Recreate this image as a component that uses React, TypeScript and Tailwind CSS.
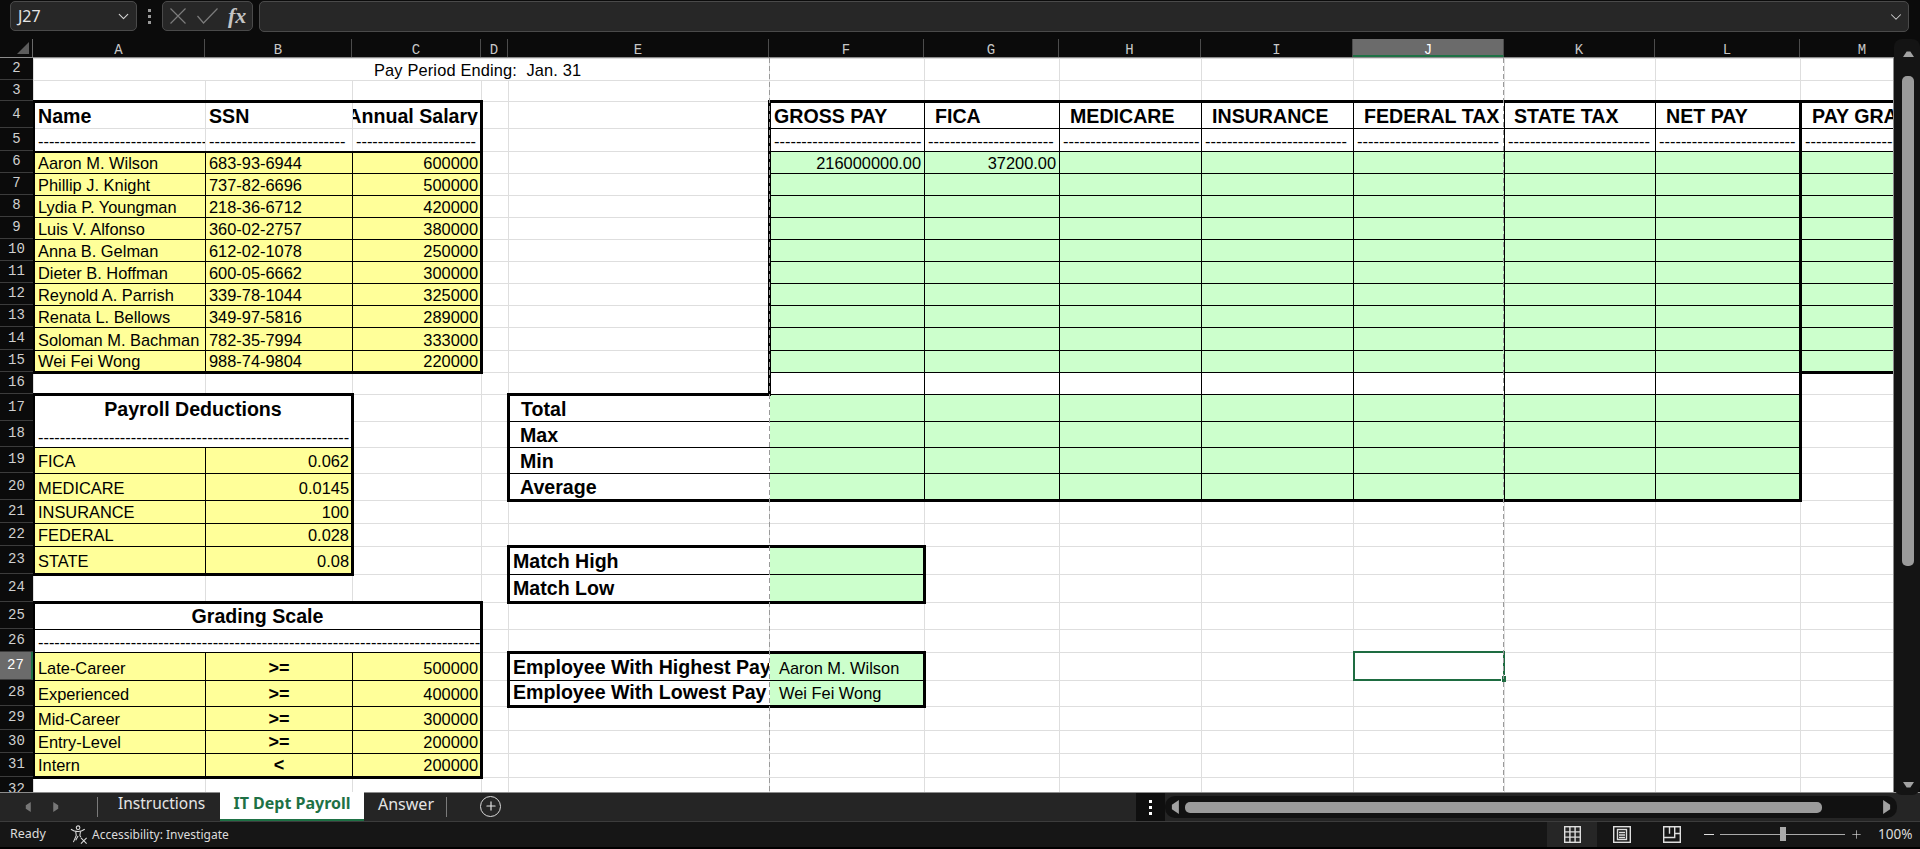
import { ChevronDown, Plus } from "lucide-react";

type Edge = "grid" | "thin" | "med" | "thick" | "none";

const columns = [
  { label: "A", w: "w-[172px]" },
  { label: "B", w: "w-[147px]" },
  { label: "C", w: "w-[129px]" },
  { label: "D", w: "w-[27px]" },
  { label: "E", w: "w-[261px]" },
  { label: "F", w: "w-[155px]" },
  { label: "G", w: "w-[135px]" },
  { label: "H", w: "w-[142px]" },
  { label: "I", w: "w-[152px]" },
  { label: "J", w: "w-[151px]" },
  { label: "K", w: "w-[151px]" },
  { label: "L", w: "w-[145px]" },
  { label: "M", w: "w-[125px]" },
];

const rows = [
  { n: 2, h: "h-[22px]" },
  { n: 3, h: "h-[21px]" },
  { n: 4, h: "h-[27px]" },
  { n: 5, h: "h-[23px]" },
  { n: 6, h: "h-[22px]" },
  { n: 7, h: "h-[22px]" },
  { n: 8, h: "h-[22px]" },
  { n: 9, h: "h-[22px]" },
  { n: 10, h: "h-[22px]" },
  { n: 11, h: "h-[22px]" },
  { n: 12, h: "h-[22px]" },
  { n: 13, h: "h-[22px]" },
  { n: 14, h: "h-[23px]" },
  { n: 15, h: "h-[22px]" },
  { n: 16, h: "h-[22px]" },
  { n: 17, h: "h-[27px]" },
  { n: 18, h: "h-[26px]" },
  { n: 19, h: "h-[26px]" },
  { n: 20, h: "h-[27px]" },
  { n: 21, h: "h-[23px]" },
  { n: 22, h: "h-[23px]" },
  { n: 23, h: "h-[28px]" },
  { n: 24, h: "h-[28px]" },
  { n: 25, h: "h-[27px]" },
  { n: 26, h: "h-[23px]" },
  { n: 27, h: "h-[28px]" },
  { n: 28, h: "h-[26px]" },
  { n: 29, h: "h-[24px]" },
  { n: 30, h: "h-[23px]" },
  { n: 31, h: "h-[24px]" },
  { n: 32, h: "h-[26px]" },
];

const topEdge: Record<Edge, string> = {
  grid: "border-t border-t-[#dedede]",
  thin: "border-t border-t-black",
  med: "border-t-2 border-t-black",
  thick: "border-t-[3px] border-t-black",
  none: "border-t border-t-transparent",
};
const rightEdge: Record<Edge, string> = {
  grid: "border-r border-r-[#dedede]",
  thin: "border-r border-r-black",
  med: "border-r-2 border-r-black",
  thick: "border-r-[3px] border-r-black",
  none: "border-r border-r-transparent",
};
const bottomEdge: Record<Edge, string> = {
  grid: "border-b border-b-[#dedede]",
  thin: "border-b border-b-black",
  med: "border-b-2 border-b-black",
  thick: "border-b-[3px] border-b-black",
  none: "border-b border-b-transparent",
};
const leftEdge: Record<Edge, string> = {
  grid: "border-l border-l-[#dedede]",
  thin: "border-l border-l-black",
  med: "border-l-2 border-l-black",
  thick: "border-l-[3px] border-l-black",
  none: "border-l border-l-transparent",
};

// edges are kept once: h = bottom of row r at col c, v = right of col c at row r
const edges = new Map<string, Edge>();
const horiz = (c1: number, c2: number, r: number, kind: Edge) => {
  for (let c = c1; c <= c2; c++) edges.set(`h:${c}:${r}`, kind);
};
const vert = (c: number, r1: number, r2: number, kind: Edge) => {
  for (let r = r1; r <= r2; r++) edges.set(`v:${c}:${r}`, kind);
};
const thinGrid = (c1: number, c2: number, r1: number, r2: number) => {
  for (let r = r1; r <= r2; r++) horiz(c1, c2, r, "thin");
  for (let c = c1; c <= c2; c++) vert(c, r1, r2, "thin");
};

// name / ssn / salary block
thinGrid(1, 3, 6, 15);
horiz(1, 3, 3, "thick");
horiz(1, 3, 5, "med");
horiz(1, 3, 15, "thick");
vert(0, 4, 15, "thick");
vert(3, 4, 15, "thick");

// pay columns
thinGrid(6, 13, 4, 15);
thinGrid(6, 12, 16, 20);
horiz(6, 13, 3, "thick");
horiz(13, 13, 15, "thick");
vert(5, 4, 16, "thick");
vert(12, 4, 20, "thick");
vert(13, 4, 15, "grid");

// totals
for (let r = 17; r <= 20; r++) horiz(5, 5, r, "thin");
horiz(5, 5, 16, "thick");
horiz(5, 12, 20, "thick");
vert(4, 17, 20, "thick");
vert(5, 17, 20, "none");

// match + employee boxes
for (const [a, b] of [
  [23, 24],
  [27, 28],
]) {
  horiz(5, 6, a - 1, "thick");
  horiz(5, 6, a, "thin");
  horiz(5, 6, b, "thick");
  vert(4, a, b, "thick");
  vert(5, a, b, "none");
  vert(6, a, b, "thick");
}

// payroll deductions
thinGrid(1, 2, 19, 23);
horiz(1, 2, 16, "thick");
horiz(1, 2, 17, "none");
horiz(1, 2, 18, "thin");
horiz(1, 2, 23, "thick");
vert(0, 17, 23, "thick");
vert(2, 17, 23, "thick");

// grading scale
thinGrid(1, 3, 27, 31);
horiz(1, 3, 24, "thick");
horiz(1, 3, 25, "thin");
horiz(1, 3, 26, "thin");
horiz(1, 3, 31, "thick");
vert(0, 25, 31, "thick");
vert(3, 25, 31, "thick");

const edgeAt = (key: string): Edge => edges.get(key) ?? "grid";

type Cell = { t?: string; span?: number; c?: string; clipLeft?: boolean };

const yellow = "bg-[#ffff99]";
const green = "bg-[#ccffcc]";
const bold = "text-[19.6px] font-bold";
const head = `${bold} pb-[3px]`;
const dash = (n: number) => "-".repeat(n);

const cells: Record<string, Cell> = {
  A2: { t: "Pay Period Ending:  Jan. 31", span: 5, c: "pl-[340px] tracking-[0.15px]" },
  A4: { t: "Name", c: `${head} pl-[3px]` },
  B4: { t: "SSN", c: `${head} pl-[3px]` },
  C4: { t: "Annual Salary", c: `${head} pr-[2px]`, clipLeft: true },
  F4: { t: "GROSS PAY", c: `${head} pl-[3px]` },
  G4: { t: "FICA", c: `${head} pl-[10px]` },
  H4: { t: "MEDICARE", c: `${head} pl-[10px]` },
  I4: { t: "INSURANCE", c: `${head} pl-[10px]` },
  J4: { t: "FEDERAL TAX", c: `${head} pl-[10px]` },
  K4: { t: "STATE TAX", c: `${head} pl-[9px]` },
  L4: { t: "NET PAY", c: `${head} pl-[10px]` },
  M4: { t: "PAY GRADE", c: `${head} pl-[10px]` },
  A5: { t: dash(31), c: "pl-[3px]" },
  B5: { t: dash(25), c: "pl-[3px]" },
  C5: { t: dash(22), c: "pl-[3px]" },
  F5: { t: dash(27), c: "pl-[3px]" },
  G5: { t: dash(23), c: "pl-[3px]" },
  H5: { t: dash(25), c: "pl-[3px]" },
  I5: { t: dash(26), c: "pl-[3px]" },
  J5: { t: dash(26), c: "pl-[3px]" },
  K5: { t: dash(26), c: "pl-[3px]" },
  L5: { t: dash(25), c: "pl-[3px]" },
  M5: { t: dash(24), c: "pl-[3px]" },
  F6: { t: "216000000.00", c: "text-right pr-[3px]" },
  G6: { t: "37200.00", c: "text-right pr-[3px]" },
  A17: { t: "Payroll Deductions", span: 2, c: `${head} text-center` },
  A18: { t: dash(57), span: 2, c: "pl-[3px]" },
  E17: { t: "Total", c: `${head} pl-[11px]` },
  E18: { t: "Max", c: `${head} pl-[10px]` },
  E19: { t: "Min", c: `${head} pl-[10px]` },
  E20: { t: "Average", c: `${head} pl-[10px]` },
  E23: { t: "Match High", c: `${bold} pb-[4px] pl-[3px]` },
  E24: { t: "Match Low", c: `${bold} pb-[4px] pl-[3px]` },
  E27: { t: "Employee With Highest Pay", c: `${bold} pb-[4px] pl-[3px]` },
  E28: { t: "Employee With Lowest Pay", c: `${bold} pb-[4px] pl-[3px]` },
  F27: { t: "Aaron M. Wilson", c: "pb-[3px] pl-[9px]" },
  F28: { t: "Wei Fei Wong", c: "pb-[3px] pl-[9px]" },
  A25: { t: "Grading Scale", span: 3, c: `${bold} pb-[4px] text-center` },
  A26: { t: dash(81), span: 3, c: "pl-[3px]" },
};

const staff = [
  ["Aaron M. Wilson", "683-93-6944", "600000"],
  ["Phillip J. Knight", "737-82-6696", "500000"],
  ["Lydia P. Youngman", "218-36-6712", "420000"],
  ["Luis V. Alfonso", "360-02-2757", "380000"],
  ["Anna B. Gelman", "612-02-1078", "250000"],
  ["Dieter B. Hoffman", "600-05-6662", "300000"],
  ["Reynold A. Parrish", "339-78-1044", "325000"],
  ["Renata L. Bellows", "349-97-5816", "289000"],
  ["Soloman M. Bachman", "782-35-7994", "333000"],
  ["Wei Fei Wong", "988-74-9804", "220000"],
];
staff.forEach(([name, ssn, pay], i) => {
  cells[`A${i + 6}`] = { t: name, c: "pl-[3px]" };
  cells[`B${i + 6}`] = { t: ssn, c: "pl-[3px]" };
  cells[`C${i + 6}`] = { t: pay, c: "text-right pr-[2px]" };
});

const deductions = [
  ["FICA", "0.062", "pb-[3px]"],
  ["MEDICARE", "0.0145", "pb-[3px]"],
  ["INSURANCE", "100", "pb-[2px]"],
  ["FEDERAL", "0.028", "pb-[2px]"],
  ["STATE", "0.08", "pb-[3px]"],
];
deductions.forEach(([name, val, pad], i) => {
  cells[`A${i + 19}`] = { t: name, c: `${pad} pl-[3px]` };
  cells[`B${i + 19}`] = { t: val, c: `${pad} text-right pr-[2px]` };
});

const grades = [
  ["Late-Career", ">=", "500000", "pb-[3px]"],
  ["Experienced", ">=", "400000", "pb-[3px]"],
  ["Mid-Career", ">=", "300000", "pb-[2px]"],
  ["Entry-Level", ">=", "200000", "pb-[2px]"],
  ["Intern", "<", "200000", "pb-[2px]"],
];
grades.forEach(([name, op, val, pad], i) => {
  cells[`A${i + 27}`] = { t: name, c: `${pad} pl-[3px]` };
  cells[`B${i + 27}`] = { t: op, c: `${pad} text-center font-bold text-[18px]` };
  cells[`C${i + 27}`] = { t: val, c: `${pad} text-right pr-[2px]` };
});

const inBox = (c: number, r: number, c1: number, c2: number, r1: number, r2: number) =>
  c >= c1 && c <= c2 && r >= r1 && r <= r2;

const fillFor = (c: number, r: number) => {
  if (inBox(c, r, 1, 3, 6, 15) || inBox(c, r, 1, 2, 19, 23) || inBox(c, r, 1, 3, 27, 31)) return yellow;
  if (
    inBox(c, r, 6, 13, 6, 15) ||
    inBox(c, r, 6, 12, 17, 20) ||
    inBox(c, r, 6, 6, 23, 24) ||
    inBox(c, r, 6, 6, 27, 28)
  )
    return green;
  return "";
};

function Sheet() {
  return (
    <table className="table-fixed border-collapse -ml-px w-[1892px] font-['Liberation_Sans',sans-serif] text-[16.4px] leading-[18px] text-black bg-white">
      <colgroup>
        {columns.map((col) => (
          <col key={col.label} className={col.w} />
        ))}
      </colgroup>
      <tbody>
        {rows.map(({ n, h }) => {
          const tds = [];
          for (let i = 0; i < columns.length; i++) {
            const c = i + 1;
            const cell = cells[`${columns[i].label}${n}`];
            const span = cell?.span ?? 1;
            const last = c + span - 1;
            const isSel = n === 27 && c === 10;
            const raw = cell?.c ?? "";
            tds.push(
              <td
                key={c}
                colSpan={span}
                className={`p-0 align-bottom overflow-hidden whitespace-pre ${fillFor(c, n)} ${raw} ${
                  raw.includes("pb-[") ? "" : "pb-px"
                } ${topEdge[edgeAt(`h:${c}:${n - 1}`)]} ${bottomEdge[edgeAt(`h:${c}:${n}`)]} ${
                  leftEdge[edgeAt(`v:${c - 1}:${n}`)]
                } ${rightEdge[edgeAt(`v:${last}:${n}`)]} ${isSel ? "relative overflow-visible" : ""}`}
              >
                {cell?.clipLeft ? <div className="flex justify-end overflow-hidden">{cell.t}</div> : cell?.t}
                {isSel && (
                  <div className="absolute -left-[1px] -top-[2px] w-[152px] h-[30px] border-2 border-[#1e6c41]">
                    <div className="absolute -right-[3px] -bottom-[3px] w-[5px] h-[7px] bg-[#1e6c41] border-l border-t border-white" />
                  </div>
                )}
              </td>,
            );
            i += span - 1;
          }
          return (
            <tr key={n} className={h}>
              {tds}
            </tr>
          );
        })}
      </tbody>
    </table>
  );
}

function Triangle({ dir, className }: { dir: "up" | "down" | "left" | "right"; className?: string }) {
  const pts = {
    up: "0,10 6,1 12,1 18,10",
    down: "0,0 18,0 12,9 6,9",
    left: "10,0 10,18 1,12 1,6",
    right: "0,0 0,18 9,12 9,6",
  }[dir];
  const box = dir === "up" || dir === "down" ? "0 0 18 10" : "0 0 10 18";
  return (
    <svg viewBox={box} className={className} fill="currentColor">
      <polygon points={pts} />
    </svg>
  );
}

function AccessibilityIcon() {
  return (
    <svg viewBox="0 0 20 20" className="w-[19px] h-[19px]" fill="none" stroke="#dcdcdc" strokeWidth="1.1">
      <circle cx="8.5" cy="2.8" r="1.9" />
      <path d="M1 4.5c2 1.6 4 2.4 7.5 2.4s5-1 7-2.4M6 7l.6 4-3 7M11 7l-.6 4 1 2M8.5 11.5 6 16" />
      <path d="M11.5 13.5l6 6M17.5 13.5l-6 6" />
    </svg>
  );
}

export default function App() {
  return (
    <div className="w-[1920px] h-[849px] overflow-hidden flex flex-col bg-[#0b0b0b] font-['Noto_Sans',sans-serif]">
      {/* Formula bar */}
      <div className="h-[39px] shrink-0 flex items-start pt-px pl-[10px]">
        <div className="w-[127px] h-[30px] flex items-center justify-between pl-[7px] pr-[4px] rounded-[5px] border border-[#4a4a4a] bg-[#272727] text-[16px] text-[#e4e4e4]">
          <span>J27</span>
          <ChevronDown size={17} strokeWidth={1.6} className="text-[#d4d4d4]" />
        </div>
        <div className="w-[25px] h-[30px] flex flex-col items-center justify-center gap-[3px]">
          <span className="w-[3px] h-[3px] bg-[#9a9a9a]" />
          <span className="w-[3px] h-[3px] bg-[#9a9a9a]" />
          <span className="w-[3px] h-[3px] bg-[#9a9a9a]" />
        </div>
        <div className="w-[91px] h-[30px] flex items-center pl-[7px] rounded-[5px] border border-[#4a4a4a] bg-[#272727]">
          <svg viewBox="0 0 16 16" className="w-[16px] h-[16px]" fill="none" stroke="#7c7c7c" strokeWidth="1.2">
            <path d="M0.5 0.5l15 15M15.5 0.5l-15 15" />
          </svg>
          <svg viewBox="0 0 21 16" className="ml-[11px] w-[21px] h-[16px]" fill="none" stroke="#7c7c7c" strokeWidth="1.2">
            <path d="M0.5 8l6 7L20.5 0.5" />
          </svg>
          <span className="ml-[10px] font-['Liberation_Serif',serif] italic font-bold text-[22px] leading-none text-[#c4c4c4]">
            fx
          </span>
        </div>
        <div className="ml-[6px] w-[1650px] h-[31px] flex items-center justify-end pr-[3px] rounded-[5px] border border-[#4a4a4a] bg-[#272727]">
          <ChevronDown size={18} strokeWidth={1.4} className="text-[#d0d0d0]" />
        </div>
      </div>

      {/* Grid + vertical scrollbar */}
      <div className="h-[753px] shrink-0 flex">
        <div className="w-[1894px] flex flex-col">
          <div className="h-[19px] shrink-0 flex border-b border-[#8c8c8c] font-['Liberation_Mono',monospace] text-[14px] leading-[18px] text-[#c8c8c8]">
            <div className="w-[33px] shrink-0 flex items-end justify-end pr-[3px] pb-[3px] border-r border-[#6a6a6a]">
              <svg viewBox="0 0 12 12" className="w-[12px] h-[12px]" fill="#5c5c5c">
                <polygon points="12,0 12,12 0,12" />
              </svg>
            </div>
            <div className="flex-1 flex overflow-hidden">
              {columns.map((col) => (
                <div
                  key={col.label}
                  className={`${col.w} shrink-0 pt-[2px] text-center border-r border-[#4c4c4c] ${
                    col.label === "J" ? "bg-[#6b6b6b] text-white border-b-2 border-b-[#1e7145]" : ""
                  }`}
                >
                  {col.label}
                </div>
              ))}
            </div>
          </div>
          <div className="flex-1 min-h-0 flex">
            <div className="w-[33px] shrink-0 overflow-hidden font-['Liberation_Mono',monospace] text-[14px] text-[#d0d0d0]">
              {rows.map(({ n, h }) => (
                <div
                  key={n}
                  className={`${h} flex items-center justify-center box-border border-b border-[#3c3c3c] ${
                    n === 27 ? "bg-[#6b6b6b] text-white border-r-2 border-r-[#1e7145]" : "bg-[#0b0b0b]"
                  }`}
                >
                  {n}
                </div>
              ))}
            </div>
            <div className="relative flex-1 overflow-hidden bg-white border-r border-[#8c8c8c]">
              <Sheet />
              {/* page break lines */}
              <div className="absolute top-0 bottom-0 left-[736px] w-px bg-[repeating-linear-gradient(to_bottom,#9a9a9a_0,#9a9a9a_5px,transparent_5px,transparent_8px)]" />
              <div className="absolute top-0 bottom-0 left-[1470px] w-px bg-[repeating-linear-gradient(to_bottom,#9a9a9a_0,#9a9a9a_5px,transparent_5px,transparent_8px)]" />
            </div>
          </div>
        </div>
        <div className="w-[26px] h-[756px] shrink-0 relative z-10 flex flex-col items-center pt-[11px] pb-[6px] pl-[2px] bg-[#141414] rounded-t-[8px] rounded-b-[8px] text-[#a2a2a2]">
          <Triangle dir="up" className="w-[11px] h-[8px]" />
          <div className="mt-[18px] w-[12px] h-[490px] rounded-[5px] bg-[#9b9b9b]" />
          <Triangle dir="down" className="mt-auto w-[11px] h-[8px]" />
        </div>
      </div>

      {/* Tabs + horizontal scrollbar */}
      <div className="h-[29px] shrink-0 flex items-stretch border-t border-[#8c8c8c] bg-[#252525] text-[16px] text-[#e4e4e4]">
        <div className="w-[220px] shrink-0 flex items-center text-[#777]">
          <Triangle dir="left" className="ml-[25px] w-[6px] h-[10px]" />
          <Triangle dir="right" className="ml-[22px] w-[6px] h-[10px]" />
          <div className="ml-[38px] h-[20px] border-l border-[#7a7a7a]" />
          <span className="ml-[20px] pb-[7px] text-[#e4e4e4] text-[15.5px]">Instructions</span>
        </div>
        <div className="w-[144px] shrink-0 flex items-center justify-center -mt-px pb-[6px] bg-white border-b-2 border-[#1e7145] text-[#1e7145] font-bold text-[16px]">
          IT Dept Payroll
        </div>
        <span className="ml-[14px] w-[54px] pb-[7px] flex items-center">Answer</span>
        <div className="ml-[14px] my-[4px] border-l border-[#7a7a7a]" />
        <div className="ml-[33px] pb-[2px] flex items-center">
          <div className="w-[21px] h-[21px] rounded-full border border-[#dadada] flex items-center justify-center">
            <Plus size={14} strokeWidth={2} className="text-[#e4e4e4]" />
          </div>
        </div>
        <div className="ml-[635px] w-[29px] shrink-0 bg-[#0f0f0f] flex flex-col items-center justify-center gap-[3px]">
          <span className="w-[3px] h-[3px] bg-white" />
          <span className="w-[3px] h-[3px] bg-white" />
          <span className="w-[3px] h-[3px] bg-white" />
        </div>
        <div className="w-[732px] shrink-0 my-[3px] flex items-center bg-[#111] rounded-[10px] text-[#a2a2a2]">
          <Triangle dir="left" className="ml-[6px] w-[8px] h-[14px]" />
          <div className="ml-[6px] w-[637px] h-[11px] rounded-[5px] bg-[#9b9b9b]" />
          <Triangle dir="right" className="ml-auto mr-[6px] w-[8px] h-[14px]" />
        </div>
      </div>

      {/* Status bar */}
      <div className="h-[26px] shrink-0 flex items-center bg-[#161616] border-t border-[#3c3c3c] text-[12.5px] text-[#dcdcdc] whitespace-nowrap">
        <span className="ml-[10px] w-[60px]">Ready</span>
        <AccessibilityIcon />
        <span className="ml-[3px] w-[138px] text-[12px]">Accessibility: Investigate</span>
        <div className="ml-[1317px] w-[50px] h-full flex items-center justify-center bg-[#262626]">
          <svg viewBox="0 0 17 17" className="w-[17px] h-[17px]" fill="none" stroke="#dedede" strokeWidth="1.4">
            <rect x="0.7" y="0.7" width="15.6" height="15.6" />
            <path d="M5.9 0.7v15.6M11.1 0.7v15.6M0.7 5.9h15.6M0.7 11.1h15.6" />
          </svg>
        </div>
        <div className="ml-[16px]">
          <svg viewBox="0 0 18 17" className="w-[18px] h-[17px]" fill="none" stroke="#dedede" strokeWidth="1.4">
            <rect x="0.7" y="0.7" width="16.6" height="15.6" />
            <rect x="4.5" y="3.5" width="9" height="10" />
            <path d="M6 6.5h6M6 9h6M6 11.5h6" />
          </svg>
        </div>
        <div className="ml-[32px]">
          <svg viewBox="0 0 18 17" className="w-[18px] h-[17px]" fill="none" stroke="#dedede" strokeWidth="1.4">
            <path d="M0.7 0.7h16.6v15.6H0.7zM0.7 11.5h11V0.7M11.7 7.5h5.6M6.5 0.7v7" />
          </svg>
        </div>
        <div className="ml-[23px] w-[10px] h-[1.5px] bg-[#dedede]" />
        <div className="ml-[6px] w-[125px] h-px bg-[#aaa] relative">
          <div className="absolute left-[60px] -top-[7px] w-[6px] h-[14px] bg-[#aaa]" />
        </div>
        <Plus size={13} strokeWidth={1.2} className="ml-[5px] text-[#dedede]" />
        <span className="ml-[15px] text-[13.5px]">100%</span>
      </div>
      <div className="flex-1 bg-black" />
    </div>
  );
}
